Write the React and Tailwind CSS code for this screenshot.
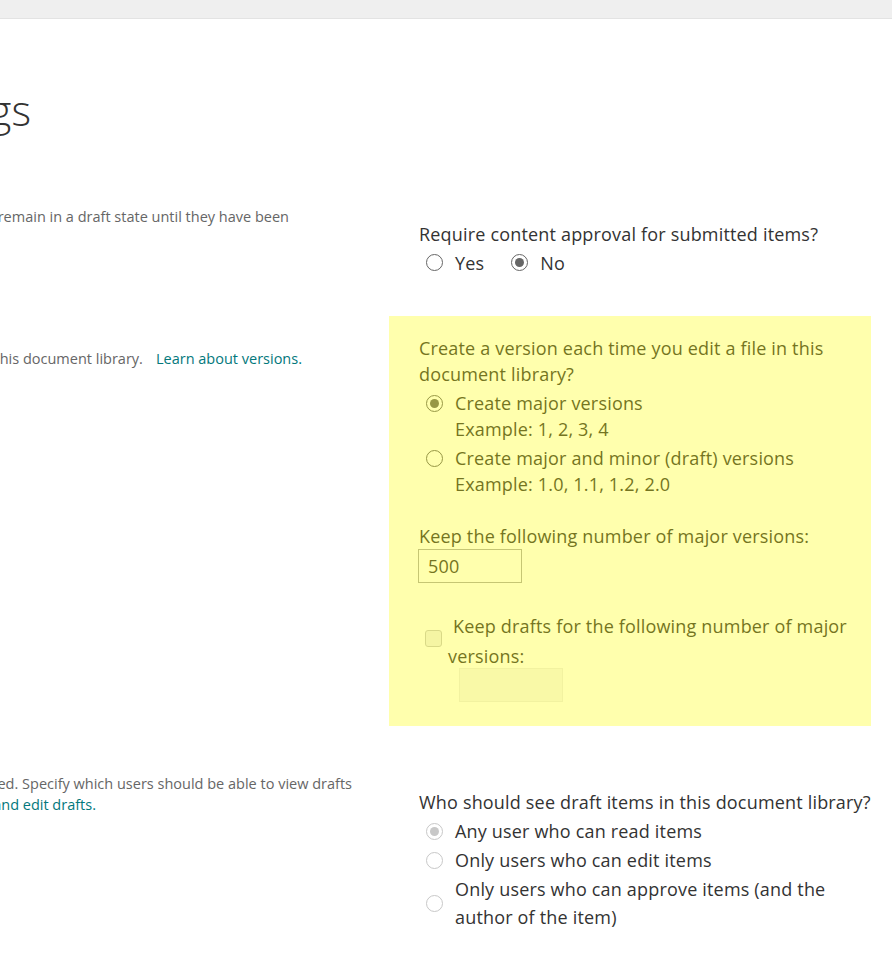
import React from 'react';

const Radio = ({ checked, disabled }) => (
  <span
    className={`flex items-center justify-center w-[17px] h-[17px] shrink-0 rounded-full border bg-white ${
      disabled ? 'border-[#c8c8c8] bg-[#f4f4f4]' : 'border-[#666]'
    }`}
  >
    {checked && (
      <span className={`w-[9px] h-[9px] rounded-full ${disabled ? 'bg-[#c8c8c8]' : 'bg-[#666]'}`} />
    )}
  </span>
);

// A line of the left column, cut at the window's left edge
const ClipLine = ({ end, children }) => (
  <div className={`flex justify-end whitespace-nowrap ${end}`}>
    <span>{children}</span>
  </div>
);

const App = () => {
  return (
    <div className="min-h-screen bg-white overflow-hidden text-[#333] font-['Open_Sans',sans-serif]">
      <div className="h-[19px] bg-[#efefef] border-b border-[#e3e3e3]" />

      {/* Page title */}
      <div className="flex justify-end whitespace-nowrap w-[31px] mt-[63px]">
        <h1 className="text-[42px] font-light leading-[56px] text-[#333]">Versioning Settings</h1>
      </div>

      {/* Content approval */}
      <div className="flex mt-[68px]">
        <div className="w-[389px] shrink-0 text-[14.5px] leading-[21px] text-[#666]">
          <ClipLine end="w-[289px]">Specify whether new items or changes to existing items should remain in a draft state until they have been</ClipLine>
        </div>
        <div className="flex-1 pl-[30px] pt-[15px] text-[18px] tracking-[0.18px] leading-[26px]">
          <div className="whitespace-nowrap">Require content approval for submitted items?</div>
          <div className="flex items-center h-[31px] pl-[7px]">
            <Radio />
            <span className="ml-[12px]">Yes</span>
            <span className="ml-[27px]"><Radio checked /></span>
            <span className="ml-[12px]">No</span>
          </div>
        </div>
      </div>

      {/* Document version history */}
      <div className="flex mt-[38px]">
        <div className="w-[389px] shrink-0 pt-[32px] text-[14.5px] leading-[21px] text-[#666]">
          <div className="flex justify-end whitespace-nowrap w-[302px]">
            <span>Specify whether a version is created each time you edit a file in this document library.</span>
            <a href="#" className="ml-[13px] text-[#03787c]">Learn about versions.</a>
          </div>
        </div>
        <div className="relative w-[482px] shrink-0 pl-[30px] pt-[19px] pb-[24px] text-[18px] tracking-[0.18px] leading-[26px]">
          <div className="whitespace-nowrap">
            Create a version each time you edit a file in this
            <br />
            document library?
          </div>
          <div className="flex items-center pl-[7px] mt-[3px]">
            <Radio checked />
            <span className="ml-[12px] whitespace-nowrap">Create major versions</span>
          </div>
          <div className="pl-[36px]">Example: 1, 2, 3, 4</div>
          <div className="flex items-center pl-[7px] mt-[3px]">
            <Radio />
            <span className="ml-[12px] whitespace-nowrap">Create major and minor (draft) versions</span>
          </div>
          <div className="pl-[36px]">Example: 1.0, 1.1, 1.2, 2.0</div>

          <div className="mt-[26px] whitespace-nowrap">Keep the following number of major versions:</div>
          <div className="w-[104px] h-[34px] border border-[#ababab] bg-white pl-[9px] flex items-center -ml-[1px]">500</div>

          <div className="flex mt-[28px]">
            <span className="w-[17px] h-[17px] mt-[19px] ml-[6px] shrink-0 rounded-[3px] border border-[#c8c8c8] bg-[#f0f0f0]" />
            <div className="ml-[6px]">
              <div className="whitespace-nowrap indent-[5px] leading-[30px]">Keep drafts for the following number of major</div>
              <div className="leading-[24px] mt-[3px]">versions:</div>
              <div className="w-[104px] h-[34px] ml-[11px] border border-[#ececec] bg-[#f6f6f6]" />
            </div>
          </div>

          {/* highlight over the section */}
          <div className="absolute inset-0 bg-[#ffff00]/[0.32] pointer-events-none" />
        </div>
      </div>

      {/* Draft item security */}
      <div className="flex mt-[44px]">
        <div className="w-[389px] shrink-0 pt-[3px] text-[14.5px] leading-[21px] text-[#666]">
          <ClipLine end="w-[352px]">Drafts are minor versions or items which have not been approved. Specify which users should be able to view drafts</ClipLine>
          <ClipLine end="w-[96px]">
            <a href="#" className="text-[#03787c]">Learn about who can view and edit drafts.</a>
          </ClipLine>
        </div>
        <div className="flex-1 pl-[30px] pt-[18px] text-[18px] tracking-[0.18px] leading-[29px]">
          <div className="whitespace-nowrap">Who should see draft items in this document library?</div>
          <div className="flex items-center pl-[7px]">
            <Radio checked disabled />
            <span className="ml-[12px] whitespace-nowrap">Any user who can read items</span>
          </div>
          <div className="flex items-center pl-[7px]">
            <Radio disabled />
            <span className="ml-[12px] whitespace-nowrap">Only users who can edit items</span>
          </div>
          <div className="flex items-center pl-[7px]">
            <Radio disabled />
            <span className="ml-[12px] whitespace-nowrap leading-[28px]">
              Only users who can approve items (and the
              <br />
              author of the item)
            </span>
          </div>
        </div>
      </div>
    </div>
  );
};

export default App;
